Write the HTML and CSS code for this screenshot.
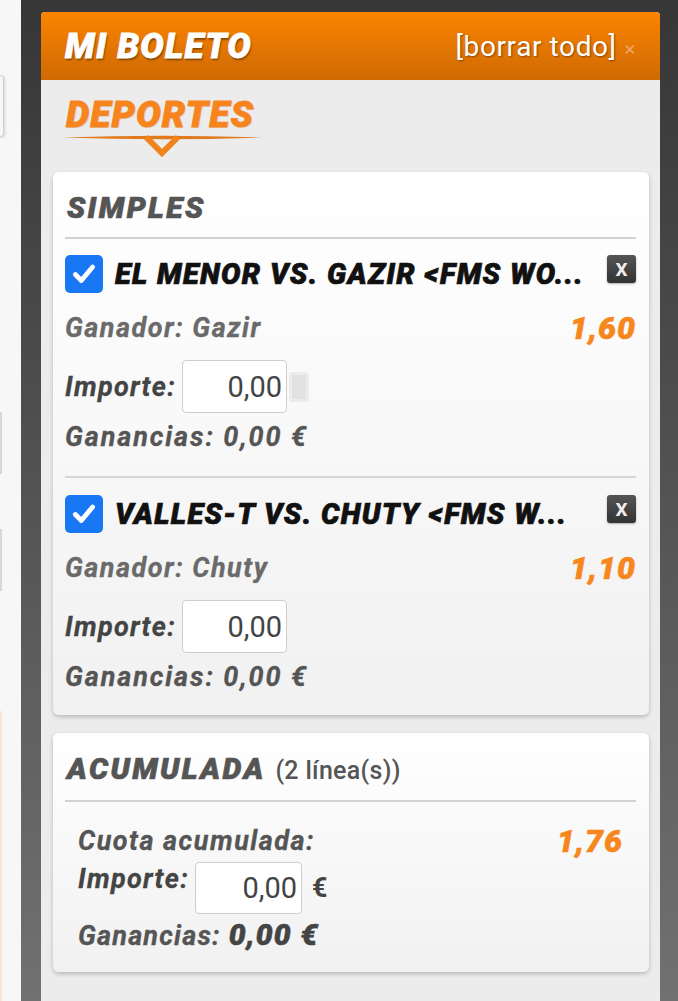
FILE: index.html
```html
<!DOCTYPE html>
<html lang="es">
<head>
  <meta charset="UTF-8" />
  <title>Mi Boleto</title>
  <link rel="stylesheet" href="styles.css">
</head>
<body>

<div class="page">
  <div class="side">
    <div class="side-box"></div>
    <div class="side-line first"></div>
    <div class="side-line"></div>
    <div class="side-orange"></div>
  </div>

  <div class="shell">
    <div class="slip">
      <div class="slip-head">
        <span class="slip-title">MI BOLETO</span>
        <span class="clear-all">[borrar todo] <span class="clear-x">×</span></span>
      </div>

      <div class="slip-body">
        <div class="tab">
          <div class="tab-label">DEPORTES</div>
          <svg class="tab-mark" width="200" height="26" viewBox="0 0 200 26">
            <path d="M0 4.5 Q100 1 200 4.5 Q100 8 0 4.5 Z" fill="#e07a1c"/>
            <polyline points="84,4 100,20 116,4" fill="none" stroke="#f0841c" stroke-width="6" stroke-linejoin="miter"/>
          </svg>
        </div>

        <div class="card">
          <div class="card-title">SIMPLES</div>

          <div class="bet">
            <div class="bet-head">
              <span class="check">
                <svg width="28" height="28" viewBox="0 0 26 26"><path d="M5 13.5 L10.5 19 L21 6.5" fill="none" stroke="#fff" stroke-width="4.5" stroke-linecap="round" stroke-linejoin="round"/></svg>
              </span>
              <span class="bet-name">EL MENOR VS. GAZIR &lt;FMS WO...</span>
              <span class="remove">X</span>
            </div>
            <div class="row">
              <span class="pick">Ganador: Gazir</span>
              <span class="odds">1,60</span>
            </div>
            <div class="row stake">
              <span class="label">Importe:</span>
              <span class="amount">0,00</span>
              <span class="ghost"></span>
            </div>
            <div class="row">
              <span class="win">Ganancias: 0,00 €</span>
            </div>
          </div>

          <div class="bet">
            <div class="bet-head">
              <span class="check">
                <svg width="28" height="28" viewBox="0 0 26 26"><path d="M5 13.5 L10.5 19 L21 6.5" fill="none" stroke="#fff" stroke-width="4.5" stroke-linecap="round" stroke-linejoin="round"/></svg>
              </span>
              <span class="bet-name">VALLES-T VS. CHUTY &lt;FMS W...</span>
              <span class="remove">X</span>
            </div>
            <div class="row">
              <span class="pick">Ganador: Chuty</span>
              <span class="odds">1,10</span>
            </div>
            <div class="row stake">
              <span class="label">Importe:</span>
              <span class="amount">0,00</span>
            </div>
            <div class="row">
              <span class="win">Ganancias: 0,00 €</span>
            </div>
          </div>
        </div>

        <div class="card combo">
          <div class="card-title">ACUMULADA <span class="lines">(2 línea(s))</span></div>
          <div class="combo-body">
            <div class="row">
              <span class="pick dark">Cuota acumulada:</span>
              <span class="odds">1,76</span>
            </div>
            <div class="combo-stake">
              <span class="label">Importe:</span>
              <span class="amount">0,00</span>
              <span class="euro">€</span>
            </div>
            <div class="row">
              <span class="win">Ganancias: <span class="win-total">0,00 €</span></span>
            </div>
          </div>
        </div>
      </div>
    </div>
  </div>
</div>

</body>
</html>
```

FILE: styles.css
```css
body {
  margin: 0;
  font-family: Roboto, 'Liberation Sans', sans-serif;
  background: #f6f6f6;
}

.page {
  display: flex;
  height: 1001px;
  overflow: hidden;
}

/* left strip: edge of the page behind the slip */
.side {
  width: 21px;
  flex-shrink: 0;
  background: #f7f7f7;
  display: flex;
  flex-direction: column;
}

.side-box {
  margin-top: 75px;
  width: 3px;
  height: 60px;
  border: 1px solid #cfcfcf;
  border-left: none;
  border-radius: 0 4px 4px 0;
  box-shadow: 1px 1px 3px rgba(0, 0, 0, 0.15);
}

.side-line {
  margin-top: 55px;
  width: 2px;
  height: 62px;
  background: #d8d8d8;
}

.side-line.first {
  margin-top: 275px;
}

.side-orange {
  margin-top: 120px;
  width: 2px;
  flex: 1;
  background: #fbe6d2;
}

.shell {
  flex: 1;
  background: linear-gradient(#363636, #717171);
  padding: 12px 18px 0 20px;
}

.slip {
  background: #ececec;
  border-radius: 4px 4px 0 0;
  min-height: 1000px;
}

.slip-head {
  height: 68px;
  display: flex;
  align-items: center;
  justify-content: space-between;
  padding: 0 24px;
  border-radius: 4px 4px 0 0;
  background: linear-gradient(#fb8400, #cf6a04);
  color: #fff;
}

.slip-title {
  font-size: 35px;
  font-weight: 900;
  font-style: italic;
  letter-spacing: 1.2px;
  -webkit-text-stroke: 0.8px #fff;
  text-shadow: 1px 2px 2px rgba(0, 0, 0, 0.45);
}

.clear-all {
  font-size: 28px;
  letter-spacing: 0.6px;
  text-shadow: 1px 1px 2px rgba(0, 0, 0, 0.4);
}

.clear-x {
  font-size: 21px;
  color: #f0a060;
  text-shadow: none;
}

.slip-body {
  padding: 0 11px 0 12px;
}

.tab {
  height: 92px;
  padding: 15px 0 0 9px;
  box-sizing: border-box;
}

.tab-label {
  font-size: 37px;
  line-height: 40px;
  font-weight: 900;
  font-style: italic;
  letter-spacing: 1.1px;
  -webkit-text-stroke: 0.8px #f7841c;
  color: #f7841c;
  padding-left: 4px;
  text-shadow: 1px 1px 1px rgba(0, 0, 0, 0.12);
}

.tab-mark {
  display: block;
  margin-top: -2px;
}

.card {
  background: linear-gradient(#ffffff, #f1f1f1);
  border-radius: 6px;
  box-shadow: 0 2px 4px rgba(0, 0, 0, 0.22);
  padding: 0 13px 0 12px;
}

.card-title {
  font-size: 30px;
  line-height: 32px;
  font-weight: 900;
  font-style: italic;
  letter-spacing: 2.4px;
  -webkit-text-stroke: 0.7px #555;
  color: #555;
  padding: 20px 0 13px 2px;
  border-bottom: 2px solid #d2d2d2;
}

.lines {
  font-size: 25px;
  font-weight: 500;
  font-style: normal;
  letter-spacing: 0.3px;
  -webkit-text-stroke: 0;
}

.bet {
  padding: 16px 0 22px;
}

.bet + .bet {
  border-top: 2px solid #d6d6d6;
  padding: 17px 0 21px;
}

.bet-head {
  height: 38px;
  display: flex;
  align-items: center;
}

.check {
  width: 38px;
  height: 38px;
  border-radius: 5px;
  background: #1877f2;
  display: flex;
  align-items: center;
  justify-content: center;
  flex-shrink: 0;
}

.bet-name {
  flex: 1;
  margin-left: 12px;
  font-size: 29px;
  font-weight: 900;
  font-style: italic;
  letter-spacing: 1.3px;
  -webkit-text-stroke: 0.7px #111;
  color: #111;
  white-space: nowrap;
}

.remove {
  width: 29px;
  height: 28px;
  margin-top: -10px;
  border-radius: 3px;
  background: linear-gradient(#555, #333);
  color: #eee;
  font-size: 19px;
  font-weight: bold;
  display: flex;
  align-items: center;
  justify-content: center;
  box-shadow: 0 1px 2px rgba(0, 0, 0, 0.3);
}

.row {
  height: 34px;
  margin-top: 18px;
  display: flex;
  align-items: center;
  justify-content: space-between;
}

.pick {
  font-size: 27px;
  font-weight: 700;
  font-style: italic;
  letter-spacing: 1.5px;
  -webkit-text-stroke: 0.3px #6a6a6a;
  color: #6a6a6a;
}

.pick.dark {
  color: #555;
  -webkit-text-stroke-color: #555;
}

.odds {
  font-size: 32px;
  font-weight: 900;
  font-style: italic;
  letter-spacing: 1px;
  -webkit-text-stroke: 0.6px #f7861c;
  color: #f7861c;
}

.row.stake {
  height: 53px;
  margin-top: 15px;
  justify-content: flex-start;
}

.label {
  font-size: 27px;
  line-height: 34px;
  font-weight: 700;
  font-style: italic;
  letter-spacing: 1.3px;
  -webkit-text-stroke: 0.3px #444;
  color: #444;
  margin-right: 6px;
}

.amount {
  width: 105px;
  height: 53px;
  box-sizing: border-box;
  border: 1px solid #cdcdcd;
  border-radius: 4px;
  background: #fff;
  padding-right: 4px;
  font-size: 29px;
  color: #444;
  display: flex;
  align-items: center;
  justify-content: flex-end;
}

.ghost {
  width: 20px;
  height: 30px;
  margin-left: 2px;
  border-radius: 3px;
  background: #e2e2e2;
  border: 3px solid #ececec;
  box-sizing: border-box;
}

.row.stake + .row {
  margin-top: 7px;
  justify-content: flex-start;
}

.win {
  font-size: 27px;
  font-weight: 700;
  font-style: italic;
  letter-spacing: 1.9px;
  -webkit-text-stroke: 0.3px #555;
  color: #555;
}

.combo {
  margin-top: 18px;
}

.combo-body {
  padding: 0 13px 21px;
}

.combo-body .row {
  margin-top: 22px;
}

.combo-body .pick {
  letter-spacing: 1.5px;
}

.combo-stake {
  margin-top: 4px;
  display: flex;
  align-items: flex-start;
}

.combo-stake .amount {
  width: 107px;
  height: 52px;
}

.euro {
  align-self: center;
  margin-left: 10px;
  font-size: 27px;
  font-weight: 700;
  color: #444;
}

.combo-body .combo-stake + .row {
  margin-top: 3px;
  justify-content: flex-start;
}

.combo-body .win {
  letter-spacing: 1.2px;
}

.win-total {
  font-size: 30px;
  font-weight: 900;
  -webkit-text-stroke: 0.6px #444;
  color: #444;
}
```
